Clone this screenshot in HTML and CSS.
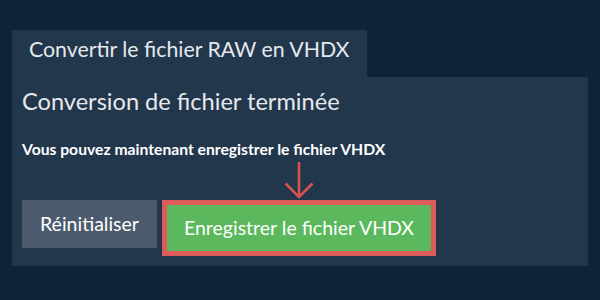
FILE: index.html
```html
<!DOCTYPE html>
<html lang="fr">
<head>
    <meta charset="UTF-8" />
    <title>Convertir le fichier RAW en VHDX</title>
    <link rel="stylesheet" href="styles.css">
</head>
<body>
    <div class="wrapper">
        <div class="tab">Convertir le fichier RAW en VHDX</div>
        <div class="panel">
            <h2 class="title">Conversion de fichier terminée</h2>
            <p class="note">Vous pouvez maintenant enregistrer le fichier VHDX</p>
            <div class="actions">
                <button class="btn btn-reset">Réinitialiser</button>
                <div class="save-wrap">
                    <svg class="arrow" width="30" height="38" viewBox="0 0 30 38">
                        <path d="M15 0 V35 M1.5 21.5 L15 35 L28.5 21.5" fill="none" stroke="#d9534f" stroke-width="2.5" />
                    </svg>
                    <button class="btn btn-save">Enregistrer le fichier VHDX</button>
                </div>
            </div>
        </div>
    </div>
</body>
</html>
```

FILE: styles.css
```css
body {
    background-color: #10233a;
    font-family: Lato, "Open Sans", sans-serif;
    margin: 0;
    color: #ffffff;
}
.wrapper {
    padding: 30px 12px 34px 12px;
}
.tab {
    display: inline-block;
    background-color: #22364c;
    font-size: 21.3px;
    width: 355px;
    height: 47px;
    line-height: 38px;
    padding: 0 0 0 17px;
    box-sizing: border-box;
    color: #e6e9ec;
}
.panel {
    background-color: #22364c;
    padding: 10px 10px 10px 10px;
    height: 189px;
    box-sizing: border-box;
}
.title {
    font-weight: normal;
    font-size: 23.6px;
    margin: 0;
    line-height: 28px;
    color: #e6e9ec;
}
.note {
    font-weight: bold;
    font-size: 15.7px;
    line-height: 18.6px;
    margin: 25px 0 0 0;
    color: #ffffff;
}
.actions {
    display: flex;
    align-items: flex-start;
    gap: 5px;
    margin-top: 3px;
}
.btn {
    font-family: Lato, "Open Sans", sans-serif;
    font-size: 19.5px;
    color: #ffffff;
    border: none;
    cursor: pointer;
}
.btn-reset {
    background-color: #4b5b6d;
    height: 48px;
    width: 135px;
    margin-top: 38px;
}
.save-wrap {
    display: flex;
    flex-direction: column;
    align-items: center;
}
.arrow {
    display: block;
}
.btn-save {
    background-color: #5cb85c;
    border: 5px solid #dc5b5b;
    height: 56px;
    width: 274px;
}
```
